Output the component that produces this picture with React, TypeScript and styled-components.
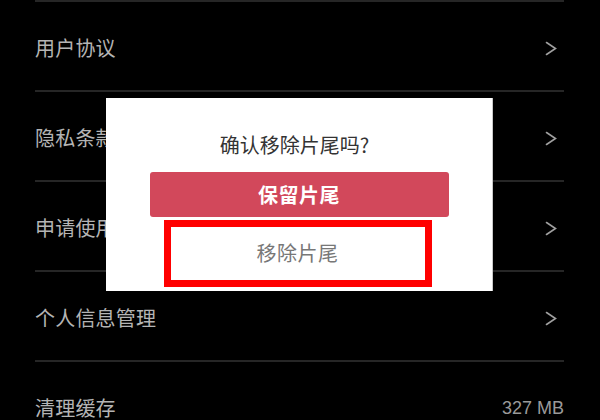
import React from "react";
import styled, { createGlobalStyle } from "styled-components";

const GlobalStyle = createGlobalStyle`
  html, body {
    margin: 0;
    padding: 0;
    background: #000;
  }
  body {
    font-family: "Noto Sans CJK SC", "Noto Sans", sans-serif;
  }
  * { box-sizing: border-box; }
`;

const Screen = styled.div`
  position: relative;
  width: 600px;
  height: 420px;
  overflow: hidden;
  background: #000;
`;

const List = styled.div`
  display: flex;
  flex-direction: column;
  padding: 0 36px 0 35px;
`;

const Row = styled.div`
  display: flex;
  align-items: center;
  justify-content: space-between;
  height: 90px;
  flex: 0 0 90px;
  padding-top: 4px;
  border-top: 2px solid #262626;
`;

const Label = styled.span`
  font-size: 20px;
  line-height: 28px;
  color: #b4b4b4;
  letter-spacing: 0.2px;
`;

const Value = styled.span`
  font-family: "Liberation Sans", "Noto Sans CJK SC", sans-serif;
  font-size: 18px;
  color: #9a9a9a;
`;

const ChevronBox = styled.span`
  display: flex;
  margin-right: 7px;
`;

const Chevron = () => (
  <ChevronBox>
    <svg width="12" height="15" viewBox="0 0 12 15" fill="none">
      <polyline
        points="1.5,1.5 10.5,7.5 1.5,13.5"
        stroke="#a0a0a0"
        strokeWidth="1.6"
        strokeLinecap="round"
        strokeLinejoin="miter"
      />
    </svg>
  </ChevronBox>
);

const Dialog = styled.div`
  position: absolute;
  left: 106px;
  top: 98px;
  width: 387px;
  height: 193px;
  background: #fff;
  border-right: 1px solid #c8c8c8;
  display: flex;
  flex-direction: column;
  align-items: center;
  padding-top: 33px;
`;

const Title = styled.div`
  font-size: 20px;
  line-height: 28px;
  color: #333;
  margin-left: -9px;
`;

const PrimaryButton = styled.div`
  margin-top: 13px;
  width: 299px;
  height: 45px;
  border-radius: 3px;
  background: #d2485b;
  color: #fff;
  font-size: 20px;
  font-weight: 700;
  display: flex;
  align-items: center;
  justify-content: center;
  letter-spacing: 0.5px;
`;

const SecondaryButton = styled.div`
  margin-top: 3px;
  margin-left: -3px;
  width: 268px;
  height: 67px;
  border: 7px solid #ff0000;
  color: #777;
  font-size: 20px;
  display: flex;
  align-items: center;
  justify-content: center;
  padding-bottom: 3px;
  letter-spacing: 0.5px;
`;

const rows: { label: string; value?: string }[] = [
  { label: "用户协议" },
  { label: "隐私条款" },
  { label: "申请使用" },
  { label: "个人信息管理" },
  { label: "清理缓存", value: "327 MB" },
];

export default function App() {
  return (
    <>
      <GlobalStyle />
      <Screen>
        <List>
          {rows.map((r) => (
            <Row key={r.label}>
              <Label>{r.label}</Label>
              {r.value ? <Value>{r.value}</Value> : <Chevron />}
            </Row>
          ))}
        </List>
        <Dialog>
          <Title>确认移除片尾吗?</Title>
          <PrimaryButton>保留片尾</PrimaryButton>
          <SecondaryButton>移除片尾</SecondaryButton>
        </Dialog>
      </Screen>
    </>
  );
}
